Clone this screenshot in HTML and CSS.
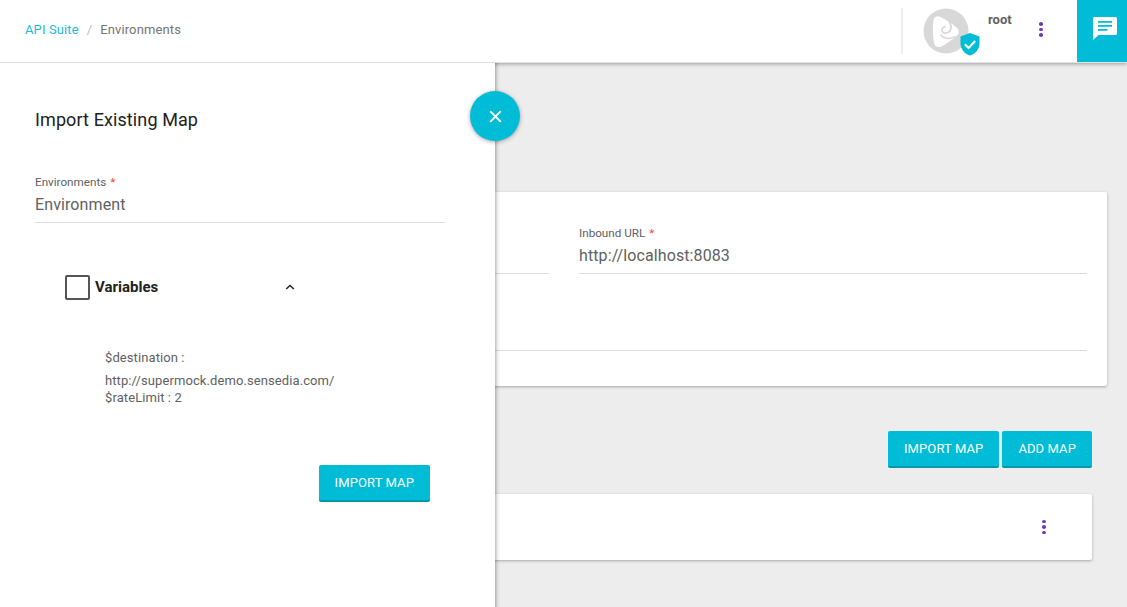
FILE: index.html
```html
<!DOCTYPE html>
<html lang="en">
<head>
<meta charset="utf-8">
<title>Environments</title>
<link rel="stylesheet" href="styles.css">
</head>
<body>
<header class="topbar">
  <nav class="crumbs">
    <a class="crumb-link">API Suite</a>
    <span class="crumb-sep">/</span>
    <span class="crumb-current">Environments</span>
  </nav>
  <div class="user">
    <div class="avatar">
      <svg class="logo" viewBox="0 0 46 46" width="46" height="46">
        <circle cx="23" cy="23" r="22.5" fill="#d8d8d8"/>
        <path d="M10.5 12C11 8.5 14.5 7.5 17.5 9C23 11.5 29 15.5 33.5 19.5C36.5 22 36.5 25.5 33.5 28C29 32 23.5 36 18.5 38.5C15 40 11.5 38.5 11 35C9.8 27.5 9.6 19.5 10.5 12Z" fill="#fff"/>
        <path d="M25.5 12.5C29 17 29 22 25 24.5C22 26.2 18.5 24.5 19 21.5C19.3 19.8 21 18.5 22.5 19" fill="none" stroke="#d8d8d8" stroke-width="1.7"/>
        <path d="M17.5 26.5C21 31 26.5 31.5 32.5 28.5" fill="none" stroke="#d8d8d8" stroke-width="1.4"/>
      </svg>
      <svg class="shield" viewBox="0 0 20 23" width="20" height="23">
        <path d="M10 0L19.5 3.5V10.5C19.5 16 15.5 20.8 10 22.5C4.5 20.8 0.5 16 0.5 10.5V3.5Z" fill="#00bcd6"/>
        <path d="M4.8 11.2L8.6 15L15.2 8" fill="none" stroke="#fff" stroke-width="2"/>
      </svg>
    </div>
    <span class="username">root</span>
    <span class="dots dots-top"><i></i><i></i><i></i></span>
  </div>
  <button class="chat" aria-label="Chat">
    <svg viewBox="0 0 24 23" width="24" height="23">
      <path d="M1.5 0H22.5C23.3 0 24 .7 24 1.5V16.5C24 17.3 23.3 18 22.5 18H5.5L0 23V1.5C0 .7 .7 0 1.5 0Z" fill="#fff"/>
      <path d="M5 4H19V5.8H5ZM5 8H19V9.8H5ZM5 12H14.5V13.8H5Z" fill="#00bcd6"/>
    </svg>
  </button>
</header>

<main class="content">
  <section class="card env-card">
    <div class="env-fields">
      <div class="field"><span class="field-label">Name <b>*</b></span><span class="field-value">&nbsp;</span></div>
      <div class="field"><span class="field-label">Inbound URL <b>*</b></span><span class="field-value">http://localhost:8083</span></div>
    </div>
    <div class="env-line"></div>
  </section>
  <div class="map-actions">
    <button class="btn">IMPORT MAP</button>
    <button class="btn">ADD MAP</button>
  </div>
  <section class="card map-card">
    <span class="dots"><i></i><i></i><i></i></span>
  </section>
</main>

<aside class="drawer">
  <h1 class="drawer-title">Import Existing Map</h1>
  <div class="field drawer-field"><span class="field-label">Environments <b>*</b></span><span class="field-value">Environment</span></div>
  <div class="vars-head">
    <span class="checkbox"></span>
    <span class="vars-title">Variables</span>
    <svg class="chevron" viewBox="0 0 10 6" width="10" height="6"><path d="M1.2 5L5 1.5L8.8 5" fill="none" stroke="#222" stroke-width="1.5"/></svg>
  </div>
  <div class="vars-body">
    <p class="var-name">$destination :</p>
    <p class="var-lines">http://supermock.demo.sensedia.com/<br>$rateLimit : 2</p>
  </div>
  <div class="drawer-actions"><button class="btn btn-wide">IMPORT MAP</button></div>
  <button class="fab" aria-label="Close">
    <svg viewBox="0 0 13 13" width="13" height="13"><path d="M1.2 1.2L11.8 11.8M11.8 1.2L1.2 11.8" stroke="#fff" stroke-width="1.8" fill="none"/></svg>
  </button>
</aside>
</body>
</html>
```
FILE: styles.css
```css
* { box-sizing: border-box; }
html, body { height: 100%; }
body {
  margin: 0;
  height: 607px;
  overflow: hidden;
  background: #ededed;
  font-family: Roboto, "Liberation Sans", sans-serif;
  color: #616161;
  position: relative;
}
button { font-family: inherit; cursor: pointer; }

.topbar {
  height: 63px;
  background: #fff;
  display: flex;
  align-items: flex-start;
  border-bottom: 1px solid #e2e2e2;
  box-shadow: 0 1px 4px rgba(0,0,0,.35);
  position: relative;
  z-index: 1;
}
.crumbs {
  flex: 1;
  padding: 22px 0 0 25px;
  font-size: 13px;
  line-height: 16px;
  letter-spacing: .12px;
  display: flex;
}
.crumb-link { color: #1cbcd8; }
.crumb-sep { color: #bdbdbd; margin: 0 8px; }
.crumb-current { color: #757575; }

.user {
  width: 176px;
  height: 46px;
  margin-top: 8px;
  border-left: 2px solid #eeeeee;
  display: flex;
  align-items: flex-start;
  padding-left: 20px;
}
.avatar { position: relative; width: 46px; height: 46px; }
.logo { display: block; }
.shield { position: absolute; left: 37px; top: 25px; }
.username {
  margin: 5px 0 0 19px;
  font-size: 13px;
  font-weight: 700;
  line-height: 14px;
  color: #616161;
}
.dots { display: flex; flex-direction: column; gap: 2px; width: 4px; }
.dots i { width: 4px; height: 3.5px; border-radius: 50%; background: #7038b4; }
.dots-top { margin: 14px 0 0 27px; }

.chat {
  width: 50px;
  height: 62px;
  border: 0;
  padding: 0 0 5px 6px;
  background: #00bcd6;
  display: flex;
  align-items: center;
  justify-content: center;
}

.content { padding: 129px 20px 0 20px; }
.card {
  background: #fff;
  border-radius: 2px;
  box-shadow: 0 1px 3px rgba(0,0,0,.3);
}
.env-card { height: 194px; padding: 34px 20px 0 20px; }
.env-fields {
  display: grid;
  grid-template-columns: 1fr 508px;
  column-gap: 30px;
}
.field { display: flex; flex-direction: column; border-bottom: 1px solid #dcdcdc; height: 48px; }
.field-label { font-size: 11.7px; line-height: 14px; color: #616161; }
.field-label b { color: #f44336; font-weight: 400; margin-left: 1px; }
.field-value { font-size: 16px; line-height: 19px; margin-top: 6px; color: #616161; letter-spacing: .1px; }
.env-line { height: 1px; background: #dcdcdc; margin-top: 76px; }

.map-actions {
  display: flex;
  justify-content: flex-end;
  gap: 3px;
  margin: 45px 15px 0 0;
}
.btn {
  height: 37px;
  padding: 0 16px;
  border: 0;
  border-bottom: 2px solid #0097a7;
  border-radius: 2px;
  background: #00bcd6;
  color: #fff;
  font-size: 13px;
  letter-spacing: .1px;
}
.map-card {
  height: 66px;
  margin: 26px 15px 0 0;
  display: flex;
  justify-content: flex-end;
  padding: 26px 46px 0 0;
}
.map-card .dots { height: 14px; }

.drawer {
  position: absolute;
  left: 0;
  top: 63px;
  bottom: 0;
  width: 495px;
  background: #fff;
  z-index: 2;
  padding: 46px 50px 0 35px;
}
.drawer::after {
  content: "";
  position: absolute;
  left: 100%;
  top: 0;
  bottom: 0;
  width: 5px;
  background: linear-gradient(to right, rgba(0,0,0,.25), rgba(0,0,0,.08) 50%, rgba(0,0,0,0));
}
.drawer-title {
  margin: 0;
  font-size: 18px;
  line-height: 21px;
  font-weight: 400;
  letter-spacing: .1px;
  color: #212121;
}
.drawer-field { margin-top: 45px; }
.vars-head {
  display: flex;
  align-items: center;
  margin: 52px 0 0 30px;
  height: 25px;
}
.checkbox { width: 25px; height: 25px; border: 2px solid #555; border-radius: 2px; }
.vars-title { margin: 0 0 1px 5px; font-size: 15px; font-weight: 700; color: #212121; }
.chevron { margin: 0 0 1px 127px; }
.vars-body {
  margin: 49px 0 0 70px;
  font-size: 13px;
  line-height: 17px;
  letter-spacing: .09px;
  color: #616161;
}
.var-name { margin: 0 0 6px; }
.var-lines { margin: 0; }
.drawer-actions { display: flex; justify-content: flex-end; margin: 59px 15px 0 0; }
.fab {
  position: absolute;
  z-index: 1;
  left: 470px;
  top: 28px;
  width: 50px;
  height: 50px;
  border: 0;
  border-radius: 50%;
  background: #00bcd6;
  box-shadow: 0 1px 4px rgba(0,0,0,.35);
  display: flex;
  align-items: center;
  justify-content: center;
  padding: 0;
}
```
